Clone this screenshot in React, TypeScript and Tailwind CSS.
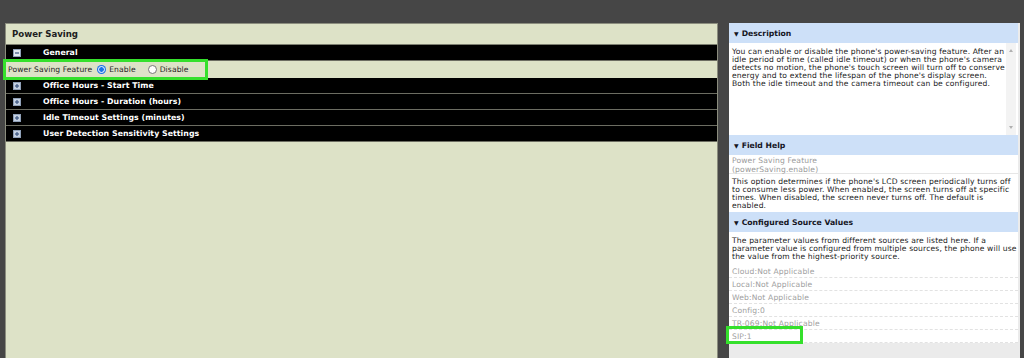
import React from "react";

const Icon = ({ minus }: { minus?: boolean }) => (
  <svg width="8" height="8" viewBox="0 0 8 8" className="shrink-0">
    <rect x="0.5" y="0.5" width="7" height="7" fill={minus ? "#e4e8f0" : "#c4d0e2"} stroke="#90a0b8" strokeWidth="1" />
    <line x1="2" y1="4" x2="6" y2="4" stroke="#3c5580" strokeWidth="1.2" />
    {!minus && <line x1="4" y1="2" x2="4" y2="6" stroke="#3c5580" strokeWidth="1.2" />}
  </svg>
);

const Row = ({ label, minus }: { label: string; minus?: boolean }) => (
  <div className="h-[16px] bg-black border-b border-[#6c6d62] flex items-center pl-[7px]">
    <Icon minus={minus} />
    <span className="ml-[22px] text-white font-bold text-[7.8px] tracking-[0.05px] leading-none">{label}</span>
  </div>
);

const Header = ({ label }: { label: string }) => (
  <div className="h-[20px] bg-[#cde0f8] flex items-center pl-[5px] pt-[2px] text-[#15151f]">
    <span className="text-[6px] leading-none mr-[3px]">▼</span>
    <span className="font-bold text-[7.7px] leading-none">{label}</span>
  </div>
);

const sources = [
  "Cloud:Not Applicable",
  "Local:Not Applicable",
  "Web:Not Applicable",
  "Config:0",
  "TR-069:Not Applicable",
  "SIP:1",
];

const txt = "text-[7.6px] tracking-[0.15px]";

export default function App() {
  return (
    <div className="w-[1024px] h-[358px] bg-[#464646] relative overflow-hidden font-['DejaVu_Sans',Verdana,sans-serif]">
      <div className="flex pt-[23px] h-full">
        {/* Left panel */}
        <div className="ml-[5px] w-[713px] h-full bg-[#dde2c7] border border-b-0 border-[#8b8d7e] flex flex-col">
          <div className="h-[21px] border-b border-[#7c7e70] flex items-center pl-[6px] pt-[1px]">
            <span className="font-bold text-[8.6px] text-[#202020] leading-none">Power Saving</span>
          </div>
          <Row label="General" minus />
          <div className="h-[17px] flex items-center pl-[2px] text-[7.6px] tracking-[0.1px] text-[#222] leading-none">
            <span>Power Saving Feature</span>
            <span className="ml-[5px] w-[9px] h-[9px] rounded-full bg-[#1a73e8] flex items-center justify-center">
              <span className="w-[5px] h-[5px] rounded-full bg-[#1a73e8] border border-white box-content"></span>
            </span>
            <span className="ml-[3px]">Enable</span>
            <span className="ml-[12px] w-[9px] h-[9px] rounded-full bg-white border border-[#777]"></span>
            <span className="ml-[3px]">Disable</span>
          </div>
          <Row label="Office Hours - Start Time" />
          <Row label="Office Hours - Duration (hours)" />
          <Row label="Idle Timeout Settings (minutes)" />
          <Row label="User Detection Sensitivity Settings" />
        </div>

        {/* Right panel */}
        <div className="ml-[11px] w-[291px] h-full bg-[#ebebeb] pr-[2px] flex flex-col">
          <Header label="Description" />
          <div className="h-[92px] bg-white flex">
            <div className={`flex-1 pl-[3px] pt-[5px] ${txt} leading-[8.1px] text-[#1a1a1a]`}>
              You can enable or disable the phone's power-saving feature. After an idle period of time (called idle timeout) or when the phone's camera detects no motion, the phone's touch screen will turn off to conserve energy and to extend the lifespan of the phone's display screen.
              <br />
              Both the idle timeout and the camera timeout can be configured.
            </div>
            <div className="w-[10px] mr-[2px] bg-[#f3f3f3] flex flex-col items-center justify-between py-[6px]">
              <span className="w-0 h-0 border-l-[2.5px] border-r-[2.5px] border-b-[3px] border-l-transparent border-r-transparent border-b-[#b0b0b0]"></span>
              <span className="w-0 h-0 border-l-[2.5px] border-r-[2.5px] border-t-[3px] border-l-transparent border-r-transparent border-t-[#b0b0b0]"></span>
            </div>
          </div>
          <Header label="Field Help" />
          <div className={`h-[19px] bg-white border-b border-[#e6e6e6] pl-[3px] pt-[2px] ${txt} leading-[8.6px] text-[#9a9a9a]`}>
            Power Saving Feature
            <br />
            (powerSaving.enable)
          </div>
          <div className={`h-[38px] bg-white pl-[3px] pt-[4px] ${txt} leading-[8px] text-[#1a1a1a]`}>
            This option determines if the phone's LCD screen periodically turns off to consume less power. When enabled, the screen turns off at specific times. When disabled, the screen never turns off. The default is enabled.
          </div>
          <Header label="Configured Source Values" />
          <div className={`h-[33px] bg-white pl-[3px] pt-[5px] ${txt} leading-[8px] text-[#1a1a1a]`}>
            The parameter values from different sources are listed here. If a parameter value is configured from multiple sources, the phone will use the value from the highest-priority source.
          </div>
          {sources.map((s) => (
            <div key={s} className={`h-[13px] bg-white border-b border-dashed border-[#e2e2e2] pl-[3px] pt-[1px] flex items-center ${txt} leading-none text-[#a0a0a0]`}>
              {s}
            </div>
          ))}
        </div>
      </div>

      {/* annotation boxes */}
      <div className="absolute left-[3px] top-[59px] w-[205px] h-[21px] border-[3px] border-[#35e02c]"></div>
      <div className="absolute left-[726px] top-[326px] w-[77px] h-[18px] border-[3px] border-[#35e02c]"></div>
    </div>
  );
}
